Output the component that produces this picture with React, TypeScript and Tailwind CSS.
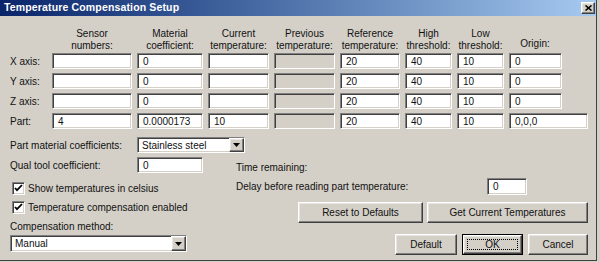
import React from "react";

const sunken =
  "border border-t-[#808080] border-l-[#808080] border-b-white border-r-white shadow-[inset_1px_1px_0_#404040,inset_-1px_-1px_0_#d4d0c8]";
const raised =
  "border border-t-white border-l-white border-b-[#404040] border-r-[#404040] shadow-[inset_-1px_-1px_0_#808080,inset_1px_1px_0_#e8e6e1]";

type FieldProps = { value?: string; className?: string; disabled?: boolean };

const Field = ({ value = "", className = "", disabled }: FieldProps) => (
  <div
    className={`${sunken} ${disabled ? "bg-[#d4d0c8]" : "bg-white"} h-[16px] flex items-center pl-[5px] overflow-hidden whitespace-nowrap ${className}`}
  >
    {value}
  </div>
);

const Arrow = () => (
  <div className={`${raised} bg-[#d4d0c8] w-[15px] h-full flex items-center justify-center`}>
    <svg width="7" height="4" viewBox="0 0 7 4">
      <path d="M0 0h7L3.5 4z" fill="#000" />
    </svg>
  </div>
);

const Select = ({ value, className = "" }: { value: string; className?: string }) => (
  <div className={`${sunken} bg-white flex items-center ${className}`}>
    <span className="flex-1 pl-[4px] whitespace-nowrap">{value}</span>
    <Arrow />
  </div>
);

const Check = ({ label }: { label: string }) => (
  <div className="flex items-center h-[14px]">
    <div className={`${sunken} bg-white w-[13px] h-[13px] ml-[2px] flex items-center justify-center`}>
      <svg width="9" height="9" viewBox="0 0 9 9">
        <path d="M1 4l2 2.2L8 1" stroke="#000" strokeWidth="1.8" fill="none" />
      </svg>
    </div>
    <span className="ml-[3px] whitespace-nowrap">{label}</span>
  </div>
);

const Btn = ({ label, className = "", primary }: { label: string; className?: string; primary?: boolean }) =>
  primary ? (
    <div className={`border border-black h-[21px] ${className}`}>
      <div className={`${raised} bg-[#d4d0c8] h-full relative flex items-center justify-center`}>
        {label}
        <div className="absolute inset-[3px] border border-dotted border-black" />
      </div>
    </div>
  ) : (
    <div className={`${raised} bg-[#d4d0c8] h-[21px] flex items-center justify-center ${className}`}>{label}</div>
  );

const headers = [
  ["Sensor", "numbers:"],
  ["Material", "coefficient:"],
  ["Current", "temperature:"],
  ["Previous", "temperature:"],
  ["Reference", "temperature:"],
  ["High", "threshold:"],
  ["Low", "threshold:"],
  ["", "Origin:"],
];

const rows = [
  { label: "X axis:", sensor: "", mat: "0", cur: "", origin: "0" },
  { label: "Y axis:", sensor: "", mat: "0", cur: "", origin: "0" },
  { label: "Z axis:", sensor: "", mat: "0", cur: "", origin: "0" },
  { label: "Part:", sensor: "4", mat: "0.0000173", cur: "10", origin: "0,0,0" },
];

export default function App() {
  return (
    <div className="w-[600px] h-[262px] bg-[#d4d0c8] font-['Liberation_Sans',Arial,sans-serif] text-[10px] text-[#111]">
      <div className="w-[597px] h-[261px] border-r border-b border-[#404040] flex flex-col">
        {/* title bar */}
        <div className="h-[16px] bg-linear-to-r from-[#0a246a] to-[#a6caf0] flex items-center justify-between pl-[4px] pr-[1px]">
          <span className="text-white font-bold text-[10.5px] tracking-[0.15px]">Temperature Compensation Setup</span>
          <div className={`${raised} bg-[#d4d0c8] w-[14px] h-[12px] flex items-center justify-center`}>
            <svg width="7" height="6" viewBox="0 0 7 6">
              <path d="M0.5 0.5l6 5M6.5 0.5l-6 5" stroke="#000" strokeWidth="1.6" />
            </svg>
          </div>
        </div>

        {/* sensor grid */}
        <div className="grid grid-cols-[37px_80px_66px_61px_61px_60px_47px_47px_auto] gap-x-[5px] gap-y-[4px] pl-[10px] pt-[12px]">
          <div />
          {headers.map(([a, b], i) => (
            <div
              key={i}
              className={`flex flex-col justify-end items-center text-center leading-[12px] mb-[-3px] whitespace-nowrap ${i === 7 ? "w-[52px] pb-[2px]" : ""}`}
            >
              {a && <span>{a}</span>}
              <span>{b}</span>
            </div>
          ))}
          {rows.map((r) => (
            <React.Fragment key={r.label}>
              <div className="flex items-center h-[16px] whitespace-nowrap">{r.label}</div>
              <Field value={r.sensor} />
              <Field value={r.mat} />
              <Field value={r.cur} />
              <Field disabled />
              <Field value="20" />
              <Field value="40" />
              <Field value="10" />
              <Field value={r.origin} className={r.label === "Part:" ? "w-[79px]" : "w-[53px]"} />
            </React.Fragment>
          ))}
        </div>

        {/* lower section */}
        <div className="flex pl-[10px] mt-[8px]">
          <div className="w-[226px] flex flex-col">
            <div className="flex items-center h-[16px]">
              <span className="w-[127px] shrink-0 whitespace-nowrap">Part material coefficients:</span>
              <Select value="Stainless steel" className="w-[108px] h-[16px] shrink-0" />
            </div>
            <div className="flex items-center h-[16px] mt-[4px]">
              <span className="w-[127px] shrink-0 whitespace-nowrap">Qual tool coefficient:</span>
              <Field value="0" className="w-[66px] shrink-0" />
            </div>
            <div className="mt-[8px]">
              <Check label="Show temperatures in celsius" />
            </div>
            <div className="mt-[5px]">
              <Check label="Temperature compensation enabled" />
            </div>
            <div className="mt-[7px] h-[12px] leading-[12px]">Compensation method:</div>
            <Select value="Manual" className="w-[177px] h-[17px] mt-[2px]" />
          </div>

          <div className="w-[352px] flex flex-col">
            <div className="mt-[25px] h-[12px] leading-[12px]">Time remaining:</div>
            <div className="flex items-center mt-[4px] h-[17px]">
              <span className="w-[251px] whitespace-nowrap">Delay before reading part temperature:</span>
              <Field value="0" className="w-[40px] h-[17px]" />
            </div>
            <div className="flex justify-end gap-[4px] mt-[7px]">
              <Btn label="Reset to Defaults" className="w-[125px]" />
              <Btn label="Get Current Temperatures" className="w-[161px]" />
            </div>
            <div className="flex justify-end gap-[5px] mt-[11px]">
              <Btn label="Default" className="w-[62px]" />
              <Btn label="OK" className="w-[61px]" primary />
              <Btn label="Cancel" className="w-[60px]" />
            </div>
          </div>
        </div>
      </div>
    </div>
  );
}
